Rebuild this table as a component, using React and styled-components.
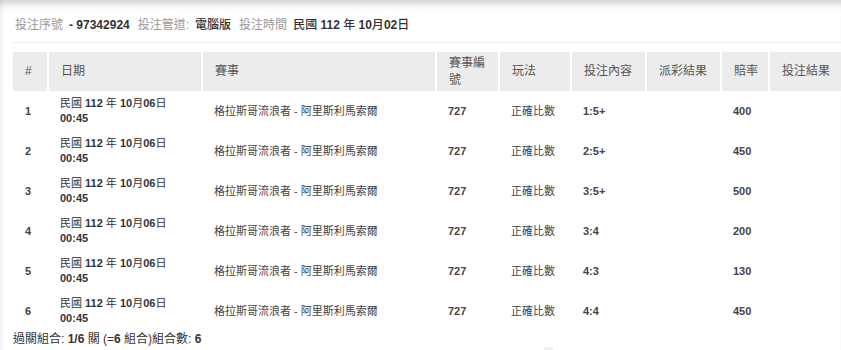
import React from "react";
import styled, { createGlobalStyle } from "styled-components";

const GlobalStyle = createGlobalStyle`
    html, body {
        margin: 0;
        padding: 0;
        background: #fff;
        overflow: hidden;
    }
    body {
        font-family: "Liberation Sans", "Noto Sans CJK TC", sans-serif;
        color: #333;
    }
`;

const rows = [
    { id: 1, pick: "1:5+", odds: "400" },
    { id: 2, pick: "2:5+", odds: "450" },
    { id: 3, pick: "3:5+", odds: "500" },
    { id: 4, pick: "3:4", odds: "200" },
    { id: 5, pick: "4:3", odds: "130" },
    { id: 6, pick: "4:4", odds: "450" },
];

const columns = [
    { label: "#", width: 35 },
    { label: "日期", width: 154 },
    { label: "賽事", width: 234 },
    { label: "賽事編號", width: 63 },
    { label: "玩法", width: 72 },
    { label: "投注內容", width: 75 },
    { label: "派彩結果", width: 75 },
    { label: "賠率", width: 48 },
    { label: "投注結果", width: 90 },
];

export default function App() {
    return (
        <>
            <GlobalStyle />
            <Page>
                <InfoBar>
                    <Label>投注序號</Label>
                    <Num>- 97342924</Num>
                    <Label>投注管道:</Label>
                    <Value>電腦版</Value>
                    <Label>投注時間</Label>
                    <Value>
                        民國 <Num>112</Num> 年 <Num>10</Num>月<Num>02</Num>日
                    </Value>
                </InfoBar>
                <Divider />
                <Table>
                    <colgroup>
                        {columns.map((c) => (
                            <col key={c.label} style={{ width: c.width }} />
                        ))}
                    </colgroup>
                    <thead>
                        <tr>
                            {columns.map((c, i) => (
                                <Th key={c.label} $first={i === 0}>{c.label}</Th>
                            ))}
                        </tr>
                    </thead>
                    <tbody>
                        {rows.map((r) => (
                            <tr key={r.id}>
                                <Td $bold>{r.id}</Td>
                                <Td $dark>
                                    民國 <Num>112</Num> 年 <Num>10</Num>月<Num>06</Num>日
                                    <br />
                                    <Num>00:45</Num>
                                </Td>
                                <Td>格拉斯哥流浪者 - 阿里斯利馬索爾</Td>
                                <Td $bold>727</Td>
                                <Td>正確比數</Td>
                                <Td $bold>{r.pick}</Td>
                                <Td></Td>
                                <Td $bold>{r.odds}</Td>
                                <Td></Td>
                            </tr>
                        ))}
                    </tbody>
                </Table>
                <Footer>
                    過關組合: <Num>1/6</Num> 關 (=<Num>6</Num> 組合)組合數: <Num>6</Num>
                </Footer>
                <Stub />
            </Page>
        </>
    );
}

const Page = styled.div`
    width: 841px;
    height: 350px;
    box-sizing: border-box;
    padding: 17px 0 0 13px;
    box-shadow: inset 0 9px 8px -6px rgba(0, 0, 0, 0.22),
        inset 5px 0 5px -4px rgba(0, 0, 0, 0.08);
    overflow: hidden;
`;
const InfoBar = styled.div`
    display: flex;
    align-items: center;
    gap: 6px;
    font-size: 12px;
    line-height: 16px;
    height: 16px;
    color: #333;
`;
const Label = styled.span`
    color: #999;
    margin-left: 2px;
`;
const Value = styled.span`
    color: #333;
    font-weight: 500;
`;
const Num = styled.b`
    font-weight: 700;
`;
const Divider = styled.div`
    height: 1px;
    background: #eee;
    margin-top: 9px;
`;
const Table = styled.table`
    margin-top: 9px;
    border-collapse: collapse;
    table-layout: fixed;
    width: 846px;
`;
const Th = styled.th`
    background: #ececec;
    color: #555;
    font-weight: 400;
    font-size: 12px;
    line-height: 17px;
    height: 39px;
    padding: 2px 6px 2px 12px;
    text-align: left;
    vertical-align: middle;
    box-sizing: border-box;
    border-left: ${(p) => (p.$first ? "none" : "2px solid #fff")};
`;
const Td = styled.td`
    font-size: 11px;
    line-height: 15px;
    height: 40px;
    padding: 0 6px 0 12px;
    color: ${(p) => (p.$dark ? "#333" : "#444")};
    font-weight: ${(p) => (p.$bold ? 700 : 400)};
    vertical-align: middle;
    box-sizing: border-box;
`;
const Footer = styled.div`
    font-size: 12px;
    line-height: 14px;
    color: #333;
    margin-top: 1px;
`;
const Stub = styled.div`
    width: 9px;
    height: 4px;
    background: #eee;
    margin: 1px 0 0 531px;
`;
